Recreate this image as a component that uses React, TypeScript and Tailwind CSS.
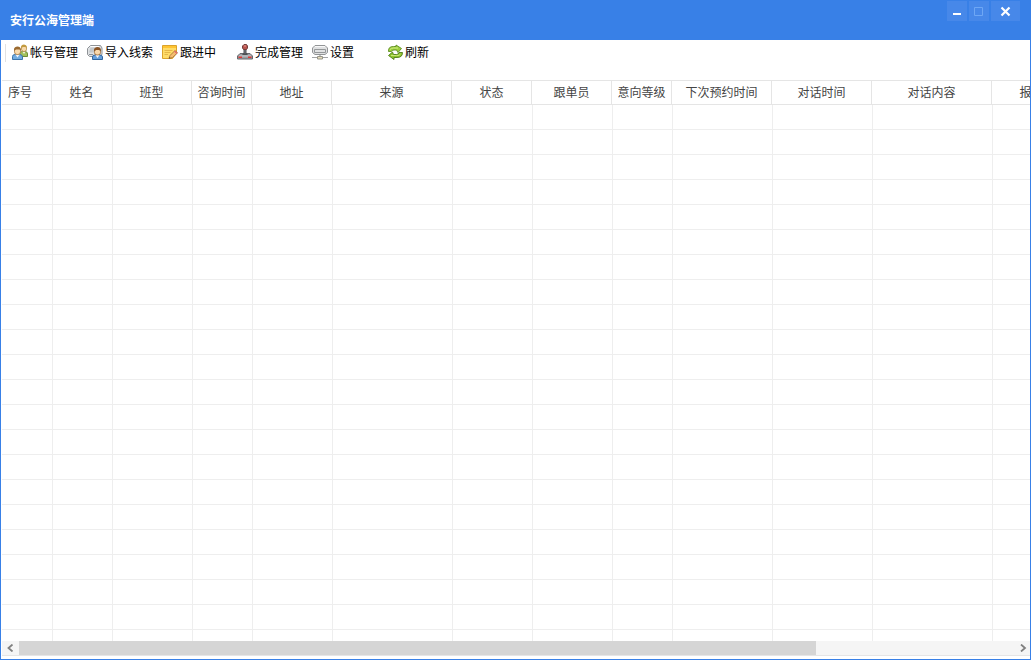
import type { ReactNode } from "react";

const columns = [
  { label: "序号", width: "w-[50px]" },
  { label: "姓名", width: "w-[60px]" },
  { label: "班型", width: "w-[80px]" },
  { label: "咨询时间", width: "w-[60px]" },
  { label: "地址", width: "w-[80px]" },
  { label: "来源", width: "w-[120px]" },
  { label: "状态", width: "w-[80px]" },
  { label: "跟单员", width: "w-[80px]" },
  { label: "意向等级", width: "w-[60px]" },
  { label: "下次预约时间", width: "w-[100px]" },
  { label: "对话时间", width: "w-[100px]" },
  { label: "对话内容", width: "w-[120px]" },
  { label: "报名", width: "w-[80px]" },
];

const emptyRows = Array.from({ length: 40 }, (_, i) => i);

function Icon({ children }: { children: ReactNode }) {
  return (
    <svg viewBox="0 0 16 16" className="size-4 shrink-0" aria-hidden="true">
      {children}
    </svg>
  );
}

function AccountsIcon() {
  return (
    <Icon>
      <path d="M8 11.5V9.500Q8 7.500 10.500 7.500H13Q15.500 7.500 15.500 10V12.500H8z" fill="#a3c15c" stroke="#6f8a35" />
      <path d="M10.500 7.500h3l-1.500 2.500z" fill="#f2f5e6" />
      <rect x="9.500" y="2" width="5" height="5.500" rx="2.200" fill="#f8d9a8" stroke="#a9813c" strokeWidth=".8" />
      <path d="M9 4.500V2.500Q9.500.5 12 .5T15 3v1.500L14 3H10.500z" fill="#c29a3f" />
      <path d="M.5 15.500V12.500Q.5 10.500 3 10.500H7.500Q10.500 10.500 10.500 13V15.500z" fill="#74ade0" stroke="#3d74ab" />
      <path d="M3.500 10.500H7.500L5.500 13.500z" fill="#f3f8ff" />
      <rect x="2.500" y="4" width="6" height="6.500" rx="2.600" fill="#fbdcae" stroke="#a87a3f" strokeWidth=".8" />
      <path d="M2 7V5Q2.500 2.500 5.500 2.500T9 5.500V7L8 5.500H4z" fill="#9b6a30" />
    </Icon>
  );
}

function ImportIcon() {
  return (
    <Icon>
      <path d="M.5 4.500L3.500 1.500H13.500L15 4V10.500L12 12.500H2.500L.5 10.500z" fill="#dfe1e3" stroke="#8e9296" />
      <path d="M3.500 3.500H8L7 8.500H2z" fill="#c4c8cb" />
      <path d="M2 10.500H6" stroke="#8d9297" />
      <path d="M3.500 2.500H12" stroke="#fff" />
      <path d="M5.500 15.500V13Q5.500 11 8 11H12.500Q15.500 11 15.500 13V15.500z" fill="#669fdc" stroke="#2f659f" />
      <path d="M8.500 11H12.500L10.500 14z" fill="#f5faff" />
      <rect x="7.500" y="5" width="6" height="6" rx="2.500" fill="#fad8aa" stroke="#95632f" strokeWidth=".8" />
      <path d="M7 7.500V5.500Q7.500 3 10.500 3T14 6v1.500L12.500 6H9z" fill="#8a5425" />
    </Icon>
  );
}

function NoteIcon() {
  return (
    <Icon>
      <path d="M.5 1.500H14.500V9L10.500 14.500H.5z" fill="#ffdc68" stroke="#dba32c" />
      <path d="M1 2H14V4H1z" fill="#ffc431" />
      <path d="M2.500 6.500H10.500M2.500 8.500H8.500M2.500 10.500H6" stroke="#e5b648" />
      <path d="M7 14.500L8 11.500L13 6.500L15.500 9L10.500 13.500z" fill="#f6bd70" stroke="#a06b30" strokeWidth=".8" />
      <path d="M12 7.500L14.500 10L15.500 9L13 6.500z" fill="#e26c68" />
      <path d="M7 14.500L7.500 13L8.500 14z" fill="#554536" />
    </Icon>
  );
}

function JoystickIcon() {
  return (
    <Icon>
      <path d="M.5 12L3 9.500H13L15.500 12V15H.5z" fill="#9a9ea2" stroke="#666a6e" />
      <path d="M2 12H14" stroke="#c9cccf" />
      <path d="M5 11L6.500 9H9.500L11 11z" fill="#4d5155" />
      <path d="M7 5h2v5H7z" fill="#777c80" stroke="#4b4f53" />
      <path d="M5.500 2L7 .5H9.500L10.500 2V4L9.500 5.500H6.500L5.500 4z" fill="#b9544e" stroke="#74403e" />
      <path d="M7 2h2" stroke="#ed9a91" />
      <path d="M1.500 12.500h3.500v1.500H1.500zM11 12.500h3.500v1.500h-3.500z" fill="#dd3934" />
    </Icon>
  );
}

function DriveIcon() {
  return (
    <Icon>
      <path d="M.5 4L3 1.500H13L15.500 4V8.500L13 10.500H3L.5 8.500z" fill="#e0e1e2" stroke="#929496" />
      <path d="M3 2.500H13" stroke="#f8f8f8" />
      <path d="M2.500 5.500H13.500V8.500H2.500z" fill="#cfd1d3" stroke="#95989a" />
      <path d="M3 7H13" stroke="#f3f3f3" />
      <path d="M7.500 10.500h1v3h-1z" fill="#85898d" />
      <path d="M0 13.500H16" stroke="#a2a4a6" />
      <path d="M5.500 12.500h5v2.500h-5z" fill="#e6ddbd" stroke="#97958a" />
    </Icon>
  );
}

function RefreshIcon() {
  return (
    <Icon>
      <path d="M1.500 7.500Q1 2.500 6.500 2.500H9V1L14.500 4.500L11 8.500L9.500 6H7Q5 6 4.500 7.500z" fill="#9ccf3c" stroke="#5d8c22" strokeWidth=".9" />
      <path d="M3 5.500Q4 4 6.500 4H11" fill="none" stroke="#d3ec86" />
      <path d="M15.500 8.500Q15.500 13.500 10 13.500H7V15.500L1.500 11.500L5.500 8L6.500 10.500H9.500Q11.500 10.500 12 8.500z" fill="#8cc42d" stroke="#4f7c1a" strokeWidth=".9" />
      <path d="M4 11.500H9.500Q12.500 12 13.500 10" fill="none" stroke="#c9e676" />
    </Icon>
  );
}

const tools = [
  { label: "帐号管理", icon: <AccountsIcon /> },
  { label: "导入线索", icon: <ImportIcon /> },
  { label: "跟进中", icon: <NoteIcon /> },
  { label: "完成管理", icon: <JoystickIcon /> },
  { label: "设置", icon: <DriveIcon /> },
  { label: "刷新", icon: <RefreshIcon /> },
];

function TitleBar() {
  return (
    <header className="flex h-10 shrink-0 justify-between bg-[#3880e7] pr-[11px] pl-[10px] text-white">
      <h1 className="self-center text-[12px] leading-4 font-bold">安行公海管理端</h1>
      <div className="flex gap-[2px] pt-px">
        <button type="button" aria-label="最小化" className="flex h-5 w-5 items-center justify-center bg-[#4788e9]">
          <svg viewBox="0 0 20 20" className="size-5">
            <path d="M6 12h8v2H6z" fill="currentColor" />
          </svg>
        </button>
        <button type="button" aria-label="最大化" className="flex h-5 w-5 items-center justify-center bg-[#4788e9] text-[#6ea7f5]">
          <svg viewBox="0 0 20 20" className="size-5">
            <path d="M5.500 6.500h8v8h-8z" fill="none" stroke="currentColor" />
          </svg>
        </button>
        <button type="button" aria-label="关闭" className="flex h-5 w-[29px] items-center justify-center bg-[#4788e9]">
          <svg viewBox="0 0 20 20" className="size-5">
            <path d="M5.500 6.500L13.500 14.500M13.500 6.500L5.500 14.500" stroke="currentColor" strokeWidth="2.200" />
          </svg>
        </button>
      </div>
    </header>
  );
}

function Toolbar() {
  return (
    <nav aria-label="工具栏" className="flex h-10 shrink-0 items-start pt-1 pl-1">
      <span className="h-[18px] w-px bg-[#e1e1e1]" />
      <div className="flex pl-[6px]">
        {tools.map((tool) => (
          <button key={tool.label} type="button" className="flex h-4 w-[75px] items-center gap-[2px] text-[12px] leading-4 whitespace-nowrap text-black">
            {tool.icon}
            {tool.label}
          </button>
        ))}
      </div>
    </nav>
  );
}

function DataGrid() {
  return (
    <main className="min-h-0 flex-1 overflow-hidden pl-px">
      <table className="w-[1070px] table-fixed border-separate border-spacing-0">
        <thead>
          <tr>
            {columns.map((column) => (
              <th
                key={column.label}
                scope="col"
                className={`${column.width} h-[25px] border-y border-r border-[#e5e5e5] p-0 pb-[2px] text-center text-[12px] leading-4 font-normal whitespace-nowrap text-[#444444] first:pl-[6px] first:text-left`}
              >
                {column.label}
              </th>
            ))}
          </tr>
        </thead>
        <tbody>
          {emptyRows.map((row) => (
            <tr key={row}>
              {columns.map((column) => (
                <td key={column.label} className="h-[25px] border-b border-l border-[#eeeeee] p-0 first:border-l-0" />
              ))}
            </tr>
          ))}
        </tbody>
      </table>
    </main>
  );
}

function HorizontalScrollbar() {
  return (
    <div className="mb-[3px] ml-px flex h-[15px] shrink-0 border-b border-[#e5e5e5] bg-[#f5f5f5] text-[#808080]">
      <button type="button" aria-label="向左滚动" className="flex w-[17px] items-center justify-center">
        <svg viewBox="0 0 7 8" className="h-2 w-[7px]">
          <path d="M5.500 .5L1.500 4L5.500 7.500" fill="none" stroke="currentColor" strokeWidth="1.800" />
        </svg>
      </button>
      <div className="flex-1">
        <div className="h-full w-[80.2%] bg-[#d5d5d5]" />
      </div>
      <button type="button" aria-label="向右滚动" className="flex w-[17px] items-center justify-center pl-1">
        <svg viewBox="0 0 7 8" className="h-2 w-[7px]">
          <path d="M1 .5L5 4L1 7.500" fill="none" stroke="currentColor" strokeWidth="1.800" />
        </svg>
      </button>
    </div>
  );
}

export default function App() {
  return (
    <div className="flex h-screen flex-col overflow-hidden bg-white font-['Noto_Sans_CJK_SC',sans-serif]">
      <TitleBar />
      <div className="flex min-h-0 flex-1 flex-col border-x border-b border-[#3880e7]">
        <Toolbar />
        <DataGrid />
        <HorizontalScrollbar />
      </div>
    </div>
  );
}
